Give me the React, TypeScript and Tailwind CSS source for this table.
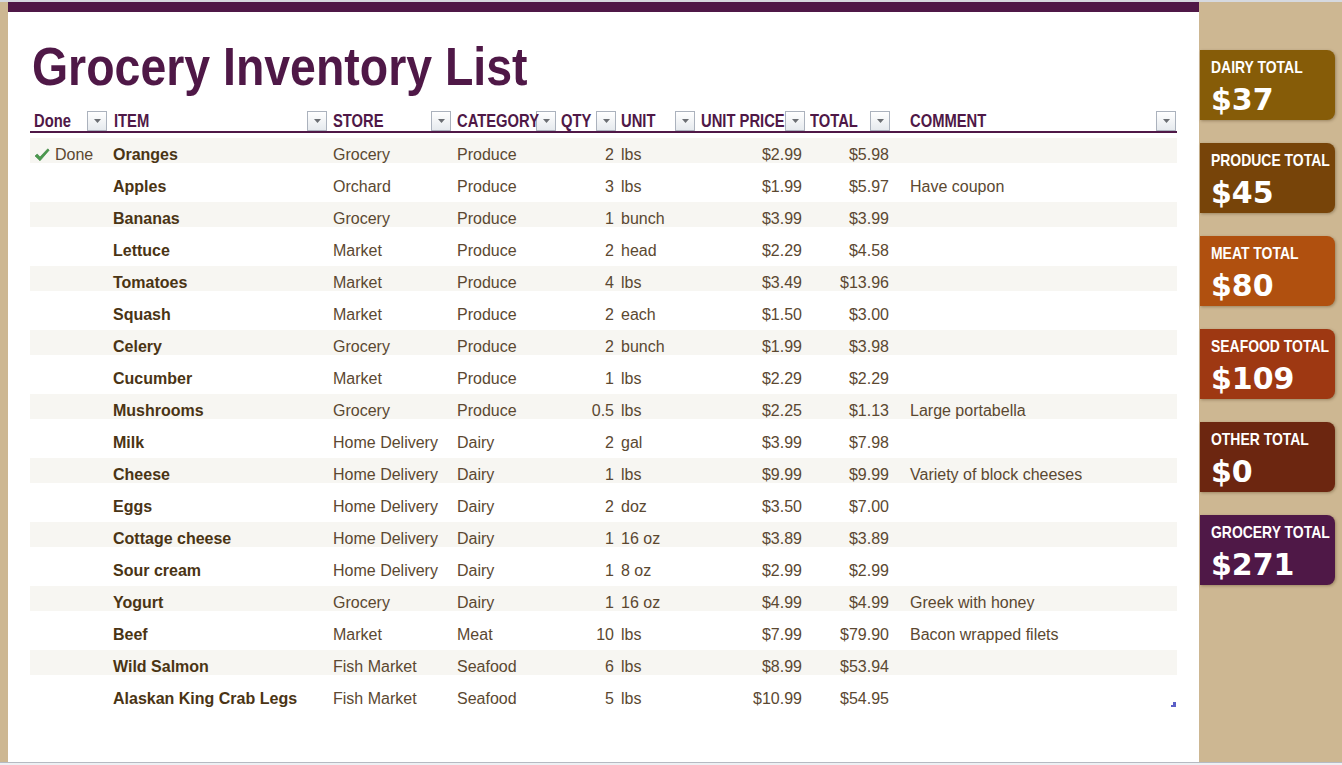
import React from "react";

type Row = {
  done?: boolean;
  item: string;
  store: string;
  category: string;
  qty: string;
  unit: string;
  price: string;
  total: string;
  comment?: string;
};

const ROWS: Row[] = [
  { done: true, item: "Oranges", store: "Grocery", category: "Produce", qty: "2", unit: "lbs", price: "$2.99", total: "$5.98" },
  { item: "Apples", store: "Orchard", category: "Produce", qty: "3", unit: "lbs", price: "$1.99", total: "$5.97", comment: "Have coupon" },
  { item: "Bananas", store: "Grocery", category: "Produce", qty: "1", unit: "bunch", price: "$3.99", total: "$3.99" },
  { item: "Lettuce", store: "Market", category: "Produce", qty: "2", unit: "head", price: "$2.29", total: "$4.58" },
  { item: "Tomatoes", store: "Market", category: "Produce", qty: "4", unit: "lbs", price: "$3.49", total: "$13.96" },
  { item: "Squash", store: "Market", category: "Produce", qty: "2", unit: "each", price: "$1.50", total: "$3.00" },
  { item: "Celery", store: "Grocery", category: "Produce", qty: "2", unit: "bunch", price: "$1.99", total: "$3.98" },
  { item: "Cucumber", store: "Market", category: "Produce", qty: "1", unit: "lbs", price: "$2.29", total: "$2.29" },
  { item: "Mushrooms", store: "Grocery", category: "Produce", qty: "0.5", unit: "lbs", price: "$2.25", total: "$1.13", comment: "Large portabella" },
  { item: "Milk", store: "Home Delivery", category: "Dairy", qty: "2", unit: "gal", price: "$3.99", total: "$7.98" },
  { item: "Cheese", store: "Home Delivery", category: "Dairy", qty: "1", unit: "lbs", price: "$9.99", total: "$9.99", comment: "Variety of block cheeses" },
  { item: "Eggs", store: "Home Delivery", category: "Dairy", qty: "2", unit: "doz", price: "$3.50", total: "$7.00" },
  { item: "Cottage cheese", store: "Home Delivery", category: "Dairy", qty: "1", unit: "16 oz", price: "$3.89", total: "$3.89" },
  { item: "Sour cream", store: "Home Delivery", category: "Dairy", qty: "1", unit: "8 oz", price: "$2.99", total: "$2.99" },
  { item: "Yogurt", store: "Grocery", category: "Dairy", qty: "1", unit: "16 oz", price: "$4.99", total: "$4.99", comment: "Greek with honey" },
  { item: "Beef", store: "Market", category: "Meat", qty: "10", unit: "lbs", price: "$7.99", total: "$79.90", comment: "Bacon wrapped filets" },
  { item: "Wild Salmon", store: "Fish Market", category: "Seafood", qty: "6", unit: "lbs", price: "$8.99", total: "$53.94" },
  { item: "Alaskan King Crab Legs", store: "Fish Market", category: "Seafood", qty: "5", unit: "lbs", price: "$10.99", total: "$54.95" },
];

const TOTALS = [
  { label: "DAIRY TOTAL", value: "$37", bg: "bg-[#865c08]" },
  { label: "PRODUCE TOTAL", value: "$45", bg: "bg-[#774409]" },
  { label: "MEAT TOTAL", value: "$80", bg: "bg-[#b0500f]" },
  { label: "SEAFOOD TOTAL", value: "$109", bg: "bg-[#9e3812]" },
  { label: "OTHER TOTAL", value: "$0", bg: "bg-[#6c2610]" },
  { label: "GROCERY TOTAL", value: "$271", bg: "bg-[#4f1847]" },
];

// no narrow face installed, so squeeze Liberation Sans bold horizontally
const squeeze = "inline-block origin-left scale-x-[0.82] whitespace-nowrap";

function FilterButton() {
  return (
    <span className="flex h-[20px] w-[20px] shrink-0 items-center justify-center border border-[#abb2bd] bg-gradient-to-b from-white to-[#e6eaee]">
      <svg width="7" height="4" viewBox="0 0 7 4">
        <polygon points="0,0 7,0 3.5,4" fill="#6b6e73" />
      </svg>
    </span>
  );
}

function CheckIcon() {
  return (
    <svg width="16" height="14" viewBox="0 0 16 14">
      <path d="M1 8 L3.2 6 L6 9 L13.8 0.8 L15.2 2.2 L6 12.8 Z" fill="#4a9a4e" stroke="#3c7f40" strokeWidth="0.6" strokeLinejoin="round" />
    </svg>
  );
}

function HeaderCell({ label, width, pl = "pl-[5px]" }: { label: string; width: string; pl?: string }) {
  return (
    <div className={`flex items-end ${width}`}>
      <div className={`min-w-0 flex-1 ${pl} text-[18px] leading-[20px] font-bold text-[#4f1847]`}>
        <span className={squeeze}>{label}</span>
      </div>
      <span className="mr-[1px]">
        <FilterButton />
      </span>
    </div>
  );
}

export default function App() {
  return (
    <div className="flex h-[765px] w-[1342px] flex-col overflow-hidden bg-[#cdb792] font-['Liberation_Sans',Arial,sans-serif]">
      <div className="h-[2px] bg-[#d6d9df]" />
      <div className="flex flex-1">
        <div className="w-[8px] bg-[#cdb792]" />
        <div className="flex w-[1191px] flex-col bg-white">
          <div className="h-[10px] bg-[#4f1847]" />
          <h1 className="ml-[24px] mt-[27px] text-[54px] leading-[54px] font-bold text-[#4f1847]">
            <span className="inline-block origin-left scale-x-[0.86] whitespace-nowrap">Grocery Inventory List</span>
          </h1>

          <div className="relative ml-[22px] mt-[18px] w-[1147px]">
            <div className="flex h-[22px] border-b-2 border-[#4f1847]">
              <HeaderCell label="Done" width="w-[78px]" pl="pl-[4px]" />
              <HeaderCell label="ITEM" width="w-[220px]" pl="pl-[6px]" />
              <HeaderCell label="STORE" width="w-[124px]" />
              <HeaderCell label="CATEGORY" width="w-[105px]" />
              <HeaderCell label="QTY" width="w-[60px]" pl="pl-[4px]" />
              <HeaderCell label="UNIT" width="w-[79px]" pl="pl-[4px]" />
              <HeaderCell label="UNIT PRICE" width="w-[110px]" />
              <HeaderCell label="TOTAL" width="w-[85px]" pl="pl-[4px]" />
              <HeaderCell label="COMMENT" width="w-[286px]" pl="pl-[19px]" />
            </div>

            <div className="mt-[5px] flex flex-col text-[16px] text-[#5b4831]">
              {ROWS.map((r, i) => (
                <div key={r.item} className="h-[32px]">
                  <div className={`flex h-[25px] items-start pt-[7px] ${i % 2 === 0 ? "bg-[#f7f6f2]" : ""}`}>
                    <div className="flex w-[78px] items-center gap-[5px] pl-[4px] leading-[20px]">
                      {r.done && (
                        <>
                          <CheckIcon />
                          <span>Done</span>
                        </>
                      )}
                    </div>
                    <div className="w-[220px] pl-[5px] leading-[20px] font-bold text-[#4a3414] whitespace-nowrap">{r.item}</div>
                    <div className="w-[124px] pl-[5px] leading-[20px] whitespace-nowrap">{r.store}</div>
                    <div className="w-[105px] pl-[5px] leading-[20px]">{r.category}</div>
                    <div className="w-[60px] pr-[3px] text-right leading-[20px]">{r.qty}</div>
                    <div className="w-[79px] pl-[4px] leading-[20px]">{r.unit}</div>
                    <div className="w-[110px] pr-[4px] text-right leading-[20px]">{r.price}</div>
                    <div className="w-[85px] pr-[2px] text-right leading-[20px]">{r.total}</div>
                    <div className="w-[286px] pl-[19px] leading-[20px] whitespace-nowrap">{r.comment ?? ""}</div>
                  </div>
                </div>
              ))}
            </div>

            <div className="absolute bottom-[7px] right-[1px] h-[5px] w-[5px]">
              <div className="absolute right-0 top-0 h-[5px] w-[3px] bg-[#5b5fc7]" />
              <div className="absolute bottom-0 right-0 h-[2px] w-[5px] bg-[#5b5fc7]" />
            </div>
          </div>
        </div>

        <div className="flex flex-1 flex-col gap-[23px] pl-[1px] pt-[48px]">
          {TOTALS.map((t) => (
            <div
              key={t.label}
              className={`h-[70px] w-[135px] rounded-r-[8px] ${t.bg} pl-[11px] pt-[9px] text-white shadow-[1px_1px_3px_rgba(60,40,10,0.35)]`}
            >
              <div className="text-[17px] leading-[17px] font-bold">
                <span className={squeeze}>{t.label}</span>
              </div>
              <div className="mt-[9px] font-['DejaVu_Sans',sans-serif] text-[30px] leading-[29px] font-bold">{t.value}</div>
            </div>
          ))}
        </div>
      </div>
      <div className="h-[3px] border-t border-[#b6bac2] bg-[#eef0f3]" />
    </div>
  );
}
